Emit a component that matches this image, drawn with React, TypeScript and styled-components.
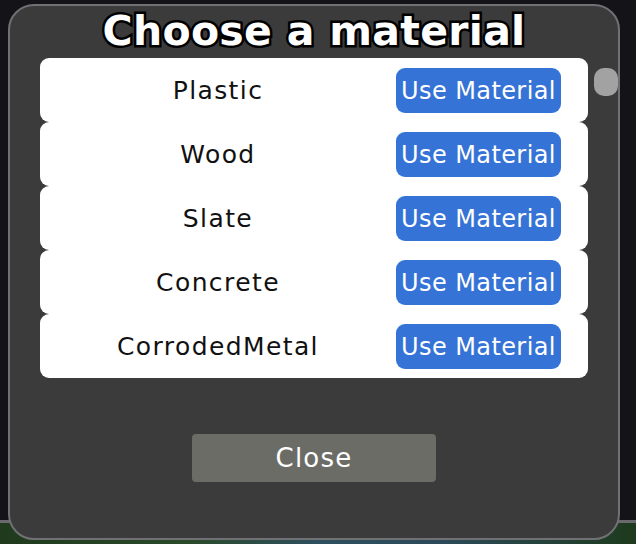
import React from "react";
import styled, { createGlobalStyle } from "styled-components";

const Global = createGlobalStyle`
  html, body { margin: 0; padding: 0; }
  body {
    width: 636px;
    height: 544px;
    overflow: hidden;
    font-family: "DejaVu Sans", "Open Sans", sans-serif;
    background:
      linear-gradient(to bottom,
        #141318 0px, #141318 520px,
        #6a6a6e 520px, #6a6a6e 523px,
        transparent 523px),
      linear-gradient(to right, #1f3a1c 0%, #2a4a2a 30%, #2d4f5e 50%, #2b4a58 70%, #1d3a1d 100%);
  }
`;

const Scene = styled.div`
  padding: 4px 16px 0 8px;
`;

const Panel = styled.div`
  box-sizing: border-box;
  width: 612px;
  height: 536px;
  background: #3b3b3b;
  border: 2px solid #707075;
  border-radius: 26px;
  display: flex;
  flex-direction: column;
  align-items: center;
  overflow: hidden;
`;

const Title = styled.h1`
  margin: 0;
  height: 52px;
  line-height: 50px;
  font-family: "DejaVu Sans", sans-serif;
  font-weight: 700;
  font-size: 41px;
  letter-spacing: 0.3px;
  color: #fff;
  -webkit-text-stroke: 5px #000;
  paint-order: stroke fill;
  white-space: nowrap;
`;

const Body = styled.div`
  align-self: stretch;
  display: flex;
  padding-left: 30px;
  gap: 6px;
`;

const List = styled.div`
  width: 548px;
  display: flex;
  flex-direction: column;
`;

const Row = styled.div`
  height: 64px;
  background: #fff;
  border-radius: 9px;
  display: flex;
  align-items: center;
  padding-right: 27px;
`;

const Label = styled.div`
  flex: 1;
  text-align: center;
  font-size: 25px;
  color: #111;
  letter-spacing: 1.4px;
`;

const UseButton = styled.button`
  width: 165px;
  height: 45px;
  margin-top: 1px;
  border: none;
  border-radius: 9px;
  background: #3573d6;
  color: #fff;
  font-family: "DejaVu Sans", sans-serif;
  font-size: 24px;
  letter-spacing: 0.4px;
  padding: 0;
  white-space: nowrap;
  cursor: pointer;
`;

const Track = styled.div`
  width: 24px;
  padding-top: 10px;
`;

const Thumb = styled.div`
  width: 24px;
  height: 28px;
  border-radius: 10px;
  background: #a2a2a2;
`;

const CloseButton = styled.button`
  margin-top: 56px;
  width: 244px;
  height: 48px;
  border: none;
  border-radius: 4px;
  background: #6c6c67;
  color: #fff;
  font-family: "DejaVu Sans", sans-serif;
  font-size: 26px;
  letter-spacing: 1.2px;
  padding: 0;
  cursor: pointer;
`;

const materials = ["Plastic", "Wood", "Slate", "Concrete", "CorrodedMetal"];

export default function App() {
  return (
    <>
      <Global />
      <Scene>
        <Panel>
          <Title>Choose a material</Title>
          <Body>
            <List>
              {materials.map((m) => (
                <Row key={m}>
                  <Label>{m}</Label>
                  <UseButton>Use Material</UseButton>
                </Row>
              ))}
            </List>
            <Track>
              <Thumb />
            </Track>
          </Body>
          <CloseButton>Close</CloseButton>
        </Panel>
      </Scene>
    </>
  );
}
